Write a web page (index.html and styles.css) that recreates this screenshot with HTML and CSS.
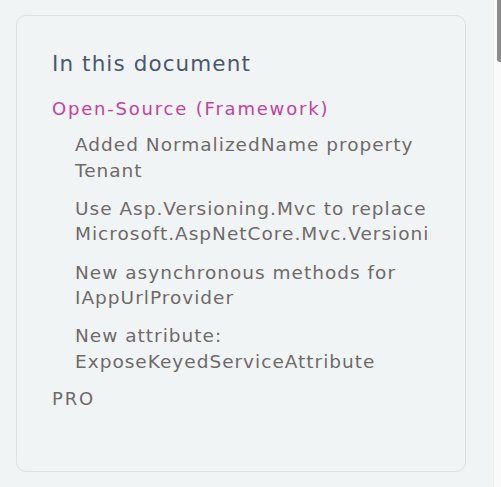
FILE: index.html
```html
<!DOCTYPE html>
<html lang="en">
<head>
<meta charset="utf-8">
<title>In this document</title>
<link rel="stylesheet" href="styles.css">
</head>
<body>
<div class="page">
  <main class="main">
    <nav class="toc">
      <h2 class="toc-title">In this document</h2>
      <a class="toc-section active" href="#">Open-Source (Framework)</a>
      <ul class="toc-list">
        <li>Added NormalizedName property Tenant</li>
        <li>Use Asp.Versioning.Mvc to replace Microsoft.AspNetCore.Mvc.Versioning</li>
        <li>New asynchronous methods for IAppUrlProvider</li>
        <li>New attribute: ExposeKeyedServiceAttribute</li>
      </ul>
      <a class="toc-section" href="#">PRO</a>
    </nav>
  </main>
  <div class="scrollbar"><div class="thumb"></div></div>
</div>
</body>
</html>
```
FILE: styles.css
```css
html, body {
  margin: 0;
  height: 100%;
}
body {
  font-family: "DejaVu Sans", sans-serif;
  background: #f1f4f5;
}
.page {
  display: flex;
  height: 100%;
}
.main {
  flex: 1;
  padding: 15px 27px 0 16px;
}
.toc {
  box-sizing: border-box;
  width: 450px;
  height: 457px;
  border: 1px solid #dcdfe3;
  border-radius: 10px;
  padding: 34px 34px 30px 35px;
  display: flex;
  flex-direction: column;
  overflow: hidden;
}
.toc-title {
  margin: 0 0 17px;
  font-size: 21.5px;
  line-height: 28px;
  font-weight: normal;
  letter-spacing: 1.1px;
  color: #4b576e;
}
.toc-section {
  display: block;
  font-size: 18px;
  line-height: 27px;
  letter-spacing: 1.8px;
  color: #6e6a6a;
  text-decoration: none;
}
.toc-section.active {
  color: #c2439b;
}
.toc-list {
  list-style: none;
  margin: 10px 0 11px;
  padding: 0 0 0 23px;
  display: flex;
  flex-direction: column;
  gap: 12.8px;
  overflow: hidden;
}
.toc-list li {
  font-size: 18.5px;
  line-height: 25.5px;
  letter-spacing: 1px;
  color: #6e6a6a;
}
.scrollbar {
  width: 8px;
  background: #fafafa;
  border-left: 1px solid #eeeeee;
  display: flex;
  justify-content: flex-end;
  align-items: flex-start;
}
.thumb {
  width: 4px;
  height: 62px;
  background: #8c8c8c;
  border-radius: 0 0 0 3px;
}
```
